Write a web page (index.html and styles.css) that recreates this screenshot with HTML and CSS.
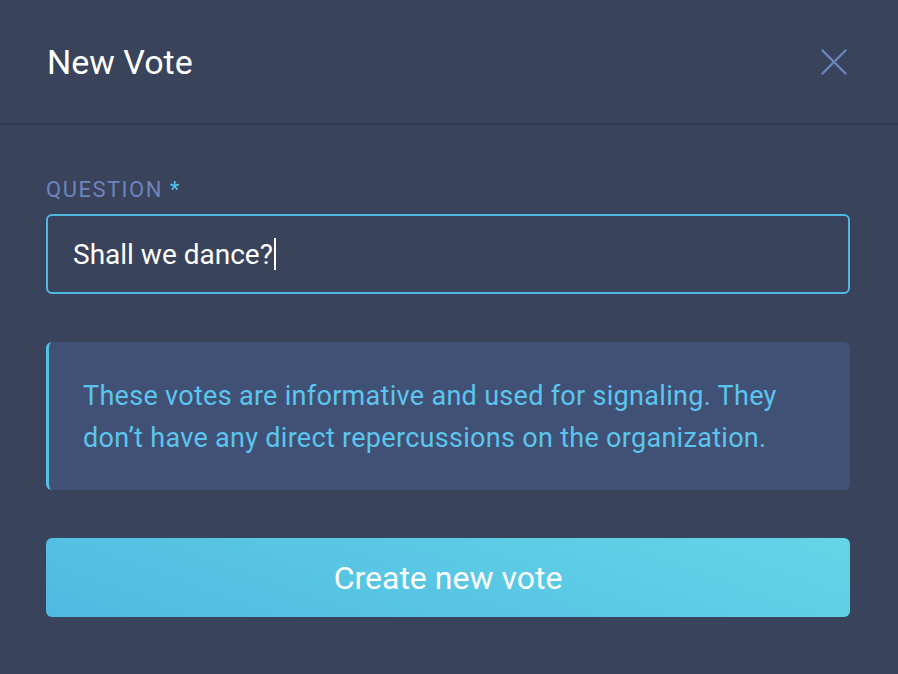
FILE: index.html
```html
<!DOCTYPE html>
<html lang="en">
<head>
<meta charset="UTF-8" />
<meta name="viewport" content="width=device-width, initial-scale=1" />
<title>New Vote</title>
<link rel="stylesheet" href="styles.css">
</head>
<body>
<div class="panel">
  <header class="panel-header">
    <h1>New Vote</h1>
    <button class="close-btn" aria-label="Close">
      <svg width="26" height="26" viewBox="0 0 26 26">
        <path d="M1.5 1.5 L24.5 24.5 M24.5 1.5 L1.5 24.5" stroke="#6d86c4" stroke-width="2.2" stroke-linecap="round" fill="none"/>
      </svg>
    </button>
  </header>

  <form class="panel-body">
    <label class="field-label" for="question">Question <span class="required">*</span></label>
    <div class="text-input">
      <span id="question">Shall we dance?</span><span class="caret"></span>
    </div>

    <div class="info">
      These votes are informative and used for signaling. They
      don’t have any direct repercussions on the organization.
    </div>

    <button type="button" class="submit-btn">Create new vote</button>
  </form>
</div>
</body>
</html>
```

FILE: styles.css
```css
body {
  margin: 0;
  background: #39435c;
  font-family: Roboto, 'Noto Sans', sans-serif;
  color: #fff;
}
.panel {
  width: 898px;
  height: 674px;
}
.panel-header {
  height: 125px;
  border-bottom: 2px solid #323b52;
  display: flex;
  align-items: center;
  justify-content: space-between;
  padding: 0 51px 0 47px;
  box-sizing: border-box;
}
.panel-header h1 {
  margin: 0;
  font-size: 34px;
  font-weight: 400;
  color: #fff;
}
.close-btn {
  background: none;
  border: none;
  padding: 0;
  width: 26px;
  height: 26px;
  cursor: pointer;
}
.close-btn svg {
  display: block;
}
.panel-body {
  padding: 51px 48px 0 46px;
  display: flex;
  flex-direction: column;
}
.field-label {
  font-size: 22px;
  letter-spacing: 1.5px;
  text-transform: uppercase;
  color: #6f83bc;
  line-height: 28px;
  margin-bottom: 10px;
}
.required {
  color: #4fc3e8;
}
.text-input {
  height: 80px;
  box-sizing: border-box;
  border: 2px solid #4fb9e2;
  border-radius: 6px;
  display: flex;
  align-items: center;
  padding: 0 25px;
  font-size: 28px;
  color: #fff;
}
.caret {
  display: inline-block;
  width: 2px;
  height: 32px;
  background: #fff;
  margin-left: 1px;
}
.info {
  margin-top: 48px;
  background: #415175;
  border-left: 3px solid #4fc3e8;
  border-radius: 6px;
  padding: 33px 30px 31px 34px;
  font-size: 27px;
  letter-spacing: 0.3px;
  line-height: 42px;
  color: #5cc5ee;
}
.submit-btn {
  margin-top: 48px;
  height: 79px;
  border: none;
  border-radius: 6px;
  background: linear-gradient(200deg, #64d5e8, #4fbae0);
  color: #fff;
  font-family: inherit;
  font-size: 32px;
  cursor: pointer;
}
```
